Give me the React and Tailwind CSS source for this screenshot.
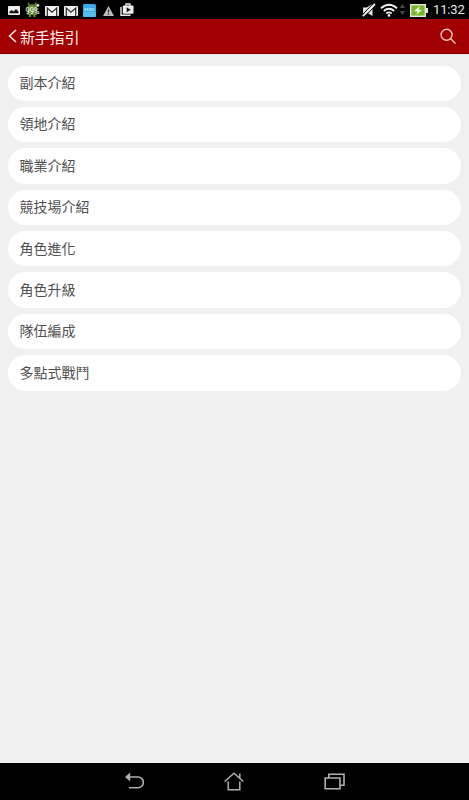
const guides = [
  '副本介紹',
  '領地介紹',
  '職業介紹',
  '競技場介紹',
  '角色進化',
  '角色升級',
  '隊伍編成',
  '多點式戰鬥',
];

const MailIcon = () => (
  <svg width="14" height="10" viewBox="0 0 14 10">
    <rect width="14" height="10" rx="1" fill="#f2f2f2" />
    <path d="M2.3 10V2L7 6.2 11.7 2v8" fill="none" stroke="#2a2a2a" strokeWidth="1.2" />
  </svg>
);

const StatusBar = () => (
  <div className="flex h-[19px] shrink-0 items-center justify-between bg-black pl-2 pr-[5px]">
    <div className="flex items-center">
      {/* Screenshot saved */}
      <svg className="mt-0.5" width="12" height="9" viewBox="0 0 12 9">
        <rect width="12" height="9" rx="1" fill="#eee" />
        <path d="M1.5 7.3V5.8L3.7 4l1.8 1.4L8 3l2.5 2.5v1.8z" fill="#111" />
      </svg>

      {/* Battery percentage */}
      <svg className="ml-1 overflow-visible" width="17" height="17" viewBox="0 0 17 17">
        <path d="M4 2l1.5 2M12.5 1.5L11 4" stroke="#6f9a35" strokeWidth="1.3" />
        <path d="M3.5 6a5 4 0 0 1 9.5 0v8H3.5z" fill="#648d2d" />
        <path d="M6 13v3M10.5 13v3" stroke="#648d2d" strokeWidth="2.2" />
        <circle cx="13.8" cy="4.2" r="1.5" fill="#dce5d2" />
        <text x="1.6" y="13.4" fontSize="9" fill="#fff" textLength="14" lengthAdjust="spacingAndGlyphs" fontFamily="Roboto, sans-serif">99%</text>
      </svg>

      <div className="ml-1 mt-0.5 flex gap-[5px]">
        <MailIcon />
        <MailIcon />
      </div>

      {/* App badge */}
      <svg className="ml-[5px] mt-0.5" width="13" height="13" viewBox="0 0 13 13">
        <rect width="13" height="13" rx="1.5" fill="#36a9e4" />
        <rect y="8" width="13" height="5" rx="1.5" fill="#56bcec" />
        <path d="M1.5 5.5h10" stroke="#8fd5f5" strokeWidth="2.8" strokeDasharray="1.8 .5" />
      </svg>

      <svg className="ml-[7px] mt-0.5" width="11" height="10" viewBox="0 0 11 10">
        <path d="M5.5 0L11 10H0z" fill="#bdbdbd" />
        <path d="M5.5 3.5v3M5.5 7.5v1.3" stroke="#222" strokeWidth="1.2" />
      </svg>

      {/* Play store */}
      <svg className="ml-1.5" width="14" height="13" viewBox="0 0 14 13">
        <path d="M1 4v8.2h9.5" fill="none" stroke="#e8e8e8" strokeWidth="1.4" />
        <path d="M6 3V1h4v2" fill="none" stroke="#eee" strokeWidth="1.3" />
        <rect x="2.8" y="2.5" width="10.7" height="8.3" rx="1" fill="#eee" />
        <path d="M6.7 4.2v5l4-2.5z" fill="#111" />
      </svg>
    </div>

    <div className="flex items-center">
      {/* Muted */}
      <svg className="mt-px" width="14" height="14" viewBox="0 0 14 14">
        <path d="M1 4.5h3.5L10.5 1v12L5.5 10H1z" fill="#e2e2e2" />
        <path d="M0 12L11.8 0" stroke="#000" strokeWidth="1" />
        <path d="M2.2 14L14 2" stroke="#000" strokeWidth="1" />
        <path d="M.9 13.2L13 1" stroke="#eee" strokeWidth="1.8" />
      </svg>

      <svg className="ml-1" width="18" height="14" viewBox="0 0 18 14" fill="none" stroke="#f2f2f2" strokeWidth="1.8">
        <path d="M1 5.2q8-7 16 0M3.8 8q5.2-4.4 10.4 0M6.3 10.5q2.7-2.2 5.4 0" />
        <circle cx="9" cy="12.4" r="1.3" fill="#f2f2f2" stroke="none" />
      </svg>

      <svg className="ml-0.5" width="5" height="11" viewBox="0 0 5 11" fill="#4b4b4b">
        <path d="M2.5 0L5 4H0zM2.5 11L0 7h5z" />
      </svg>

      {/* Charging battery */}
      <svg className="ml-[5px] mt-px" width="18" height="13" viewBox="0 0 18 13">
        <rect x=".7" y=".7" width="14.6" height="11.6" fill="#78b729" stroke="#e3ead8" strokeWidth="1.4" />
        <rect x="16" y="4" width="2" height="5" fill="#e8e8e8" />
        <path d="M9.8 2L4 7.2h3.4L6.4 11 12 5.8H8.7z" fill="#f3f8e9" />
      </svg>

      <span className="ml-[5px] w-[31px] whitespace-nowrap font-[Roboto,sans-serif] text-[13px] leading-[19px] tracking-[-0.15px] text-[#e8e8e8]">11:32</span>
    </div>
  </div>
);

const Header = () => (
  <header className="flex h-[35px] shrink-0 items-center justify-between border-b border-[#8c0000] bg-[#a20000] pl-2 pr-3">
    <div className="flex items-center">
      <svg width="9" height="14" viewBox="0 0 9 14" fill="none" stroke="#f7e5e5" strokeWidth="1.6">
        <path d="M8 1L1.5 7 8 13" />
      </svg>
      <h1 className="ml-[3px] pt-0.5 text-[15px] leading-[22px] tracking-[-0.2px] text-[#fff3f3]">新手指引</h1>
    </div>
    <svg width="17" height="17" viewBox="0 0 17 17" fill="none" stroke="#f0cccc" strokeWidth="1.4">
      <circle cx="6.6" cy="6.8" r="5.5" />
      <path d="M10.6 10.8l4.9 4.7" />
    </svg>
  </header>
);

const NavBar = () => (
  <nav className="flex h-[37px] shrink-0 items-center justify-center gap-20 bg-black pr-px">
    <svg width="20" height="20" viewBox="0 0 20 20" fill="none" stroke="#b0b0b0" strokeWidth="1.6">
      <path d="M5 5h9a5.4 5.4 0 0 1 0 10.8H5" />
      <path d="M1 5L6.2 .6v8.8z" fill="#b0b0b0" stroke="none" />
    </svg>
    <svg width="20" height="20" viewBox="0 0 20 20" fill="none" stroke="#b0b0b0" strokeWidth="1.5">
      <path d="M.7 9.5L10 1.2l9.3 8.3M15.8 5.8V1.5M4.2 9.5v8.3h11.6V9.5" />
    </svg>
    <svg className="overflow-visible" width="20" height="20" viewBox="0 0 20 20" fill="none" stroke="#b0b0b0" strokeWidth="1.6">
      <path d="M1.2 6h14.8v10.8H1.2z" />
      <path d="M4.8 6V2.2h15.2v11h-4" />
    </svg>
  </nav>
);

const App = () => {
  return (
    <div className="flex h-screen w-full flex-col bg-[#f0f0f0] font-['Noto_Sans_CJK_TC',sans-serif]">
      <StatusBar />
      <Header />
      <main className="flex-1 border-t border-[#f9e6e6] px-2 pt-[10.5px]">
        <ul className="flex flex-col gap-[6px]">
          {guides.map((title) => (
            <li key={title} className="flex h-[35.4px] items-center rounded-full bg-white pb-[2.2px] pl-[11.6px] text-sm text-[#505050]">
              {title}
            </li>
          ))}
        </ul>
      </main>
      <NavBar />
    </div>
  );
};

export default App;
